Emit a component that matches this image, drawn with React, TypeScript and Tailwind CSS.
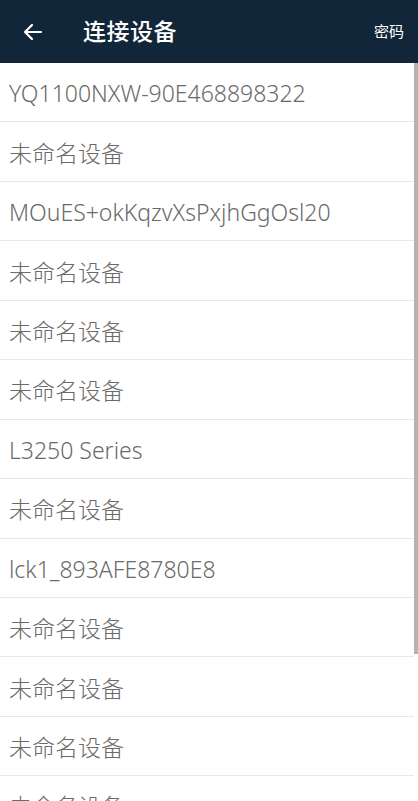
import React from 'react';

const devices = [
	'YQ1100NXW-90E468898322',
	'未命名设备',
	'MOuES+okKqzvXsPxjhGgOsl20',
	'未命名设备',
	'未命名设备',
	'未命名设备',
	'L3250 Series',
	'未命名设备',
	'lck1_893AFE8780E8',
	'未命名设备',
	'未命名设备',
	'未命名设备',
	'未命名设备',
];

function DeviceRow({name}: {name: string}) {
	return (
		<div className="h-[59.45px] shrink-0 flex items-center pl-[9px] pt-[3px] border-b-[1.5px] border-[#e8e8e8] box-border">
			<p className="text-[23px] font-light text-[#6a6a6a] leading-none whitespace-nowrap">{name}</p>
		</div>
	);
}

export default function App() {
	return (
		<div
			className="w-[418px] h-[801px] overflow-hidden bg-white flex flex-col"
			style={{fontFamily: '"Noto Sans", "Noto Sans CJK SC", sans-serif'}}
		>
			<div className="h-[63px] shrink-0 bg-[#12263a] flex items-center">
				<button className="w-[64px] h-full flex items-center justify-center pl-[1px]">
					<svg width="20" height="18" viewBox="0 0 20 18" fill="none" stroke="white" strokeWidth="2.2" strokeLinecap="round" strokeLinejoin="round">
						<path d="M18 9H2.5M9 2L2 9l7 7"/>
					</svg>
				</button>
				<h1 className="ml-[19px] text-white text-[23px] font-medium tracking-[0.5px]">连接设备</h1>
				<span className="ml-auto mr-[14px] text-white text-[15px]">密码</span>
			</div>
			<div className="flex-1 flex overflow-hidden">
				<div className="flex-1 flex flex-col">
					{devices.map((d, i) => (
						<DeviceRow key={i} name={d}/>
					))}
				</div>
				<div className="w-[4px] shrink-0 flex flex-col">
					<div className="h-[591px] bg-[#b3b3b3]"></div>
				</div>
			</div>
		</div>
	);
}
